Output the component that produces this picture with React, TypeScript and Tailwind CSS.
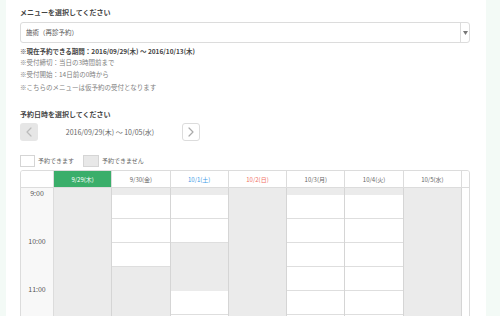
import React from "react";

// 1 = bookable (white), 0 = not bookable (gray)
const DAYS = [
  { label: "9/29(木)", tone: "today", slots: [] as number[] },
  { label: "9/30(金)", tone: "plain", slots: [1, 1, 1, 0, 0, 0, 0, 0] },
  { label: "10/1(土)", tone: "sat", slots: [1, 1, 0, 0, 1, 1, 0, 0] },
  { label: "10/2(日)", tone: "sun", slots: [] as number[] },
  { label: "10/3(月)", tone: "plain", slots: [1, 1, 1, 1, 1, 1, 1, 1] },
  { label: "10/4(火)", tone: "plain", slots: [1, 1, 1, 1, 1, 1, 1, 1] },
  { label: "10/5(水)", tone: "plain", slots: [] as number[] },
];

const HOURS = ["9:00", "10:00", "11:00"];

function headClass(tone: string) {
  if (tone === "today") return "bg-[#3aae6a] text-white";
  if (tone === "sat") return "bg-white text-[#3d9be6]";
  if (tone === "sun") return "bg-white text-[#f0705f]";
  return "bg-white text-[#666]";
}

function Chevron({ dir, color }: { dir: "l" | "r"; color: string }) {
  return (
    <svg width="6" height="10" viewBox="0 0 6 10" fill="none">
      <polyline
        points={dir === "l" ? "5,1 1,5 5,9" : "1,1 5,5 1,9"}
        stroke={color}
        strokeWidth="1.2"
        strokeLinejoin="round"
        strokeLinecap="round"
      />
    </svg>
  );
}

export default function App() {
  return (
    <div className="flex h-[316px] w-[500px] overflow-hidden bg-[#f3faf6] font-['Noto_Sans_CJK_JP','Noto_Sans',sans-serif]">
      <div className="ml-[6px] w-[480px] shrink-0 bg-white pl-[14px] pt-[7px]">
        <div className="w-[450px]">
          <p className="h-[10px] text-[7px] font-bold leading-[10px] text-[#444]">メニューを選択してください</p>

          <div className="mt-[5px] flex h-[21px] rounded-[3px] border border-[#dcdcdc]">
            <div className="flex flex-1 items-center pl-[5px] text-[6.5px] text-[#555]">施術（再診予約）</div>
            <div className="flex w-[9px] items-center justify-center border-l border-[#dcdcdc]">
              <svg width="5" height="4" viewBox="0 0 5 4">
                <polygon points="0,0 5,0 2.5,4" fill="#777" />
              </svg>
            </div>
          </div>

          <p className="mt-[4px] h-[9px] text-[6.5px] font-bold leading-[9px] text-[#444]">
            ※現在予約できる期間：2016/09/29(木) ～ 2016/10/13(木)
          </p>
          <div className="text-[6.5px] leading-[12.4px] text-[#808080]">
            <p>※受付締切：当日の3時間前まで</p>
            <p>※受付開始：14日前の0時から</p>
            <p>※こちらのメニューは仮予約の受付となります</p>
          </div>

          <p className="mt-[16px] h-[10px] text-[7px] font-bold leading-[10px] text-[#444]">予約日時を選択してください</p>

          <div className="mt-[4px] flex h-[18px] w-[180px] items-center">
            <div className="flex h-[18px] w-[18px] items-center justify-center rounded-[3px] bg-[#e6e6e6]">
              <Chevron dir="l" color="#bbb" />
            </div>
            <div className="flex-1 text-center text-[7px] text-[#666]">2016/09/29(木) ～ 10/05(水)</div>
            <div className="flex h-[18px] w-[18px] items-center justify-center rounded-[3px] border border-[#dcdcdc] bg-white">
              <Chevron dir="r" color="#aaa" />
            </div>
          </div>

          <div className="mt-[13px] flex h-[13px] items-center text-[6px] text-[#666]">
            <span className="h-[12px] w-[15px] border border-[#d5d5d5] bg-white" />
            <span className="ml-[3px]">予約できます</span>
            <span className="ml-[9px] h-[12px] w-[16px] border border-[#d5d5d5] bg-[#e8e8e8]" />
            <span className="ml-[3px]">予約できません</span>
          </div>

          <div className="mt-[3px] overflow-hidden rounded-[3px] border border-[#dcdcdc]">
            <div className="grid grid-cols-[33px_repeat(7,minmax(0,1fr))_7px] border-b border-[#dcdcdc]">
              <div className="h-[16px] border-r border-[#dcdcdc] bg-white" />
              {DAYS.map((d) => (
                <div
                  key={d.label}
                  className={`flex h-[16px] items-center justify-center border-r border-[#dcdcdc] text-[6px] ${headClass(d.tone)}`}
                >
                  {d.label}
                </div>
              ))}
              <div className="bg-white" />
            </div>

            <div className="grid h-[200px] grid-cols-[33px_repeat(7,minmax(0,1fr))_7px]">
              <div className="border-r border-[#dcdcdc] bg-[#f8f8f8]">
                {HOURS.map((h) => (
                  <div key={h} className="h-[48px] text-center text-[7px] leading-[10px] text-[#555]">
                    {h}
                  </div>
                ))}
              </div>
              {DAYS.map((d) => (
                <div key={d.label} className="border-r border-[#d5d5d5] bg-[#ebebeb]">
                  {d.slots.length > 0 && <div className="h-[7px]" />}
                  {d.slots.map((s, i) =>
                    s ? (
                      <div key={i} className="h-[24px] border-b border-[#dedede] bg-white" />
                    ) : (
                      <div key={i} className="h-[24px]" />
                    )
                  )}
                </div>
              ))}
              <div className="bg-white" />
            </div>
          </div>
        </div>
      </div>
    </div>
  );
}
